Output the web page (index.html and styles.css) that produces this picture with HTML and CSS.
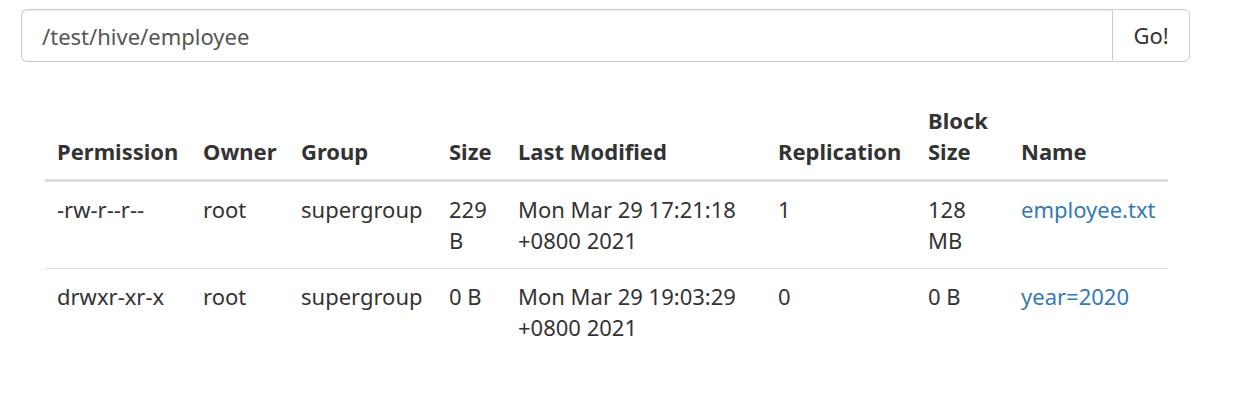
FILE: index.html
```html
<!DOCTYPE html>
<html>
<head>
<meta charset="utf-8">
<link rel="stylesheet" href="styles.css">
</head>
<body>
<div class="page">
  <form class="search">
    <input class="path" type="text" value="/test/hive/employee">
    <button class="go" type="button">Go!</button>
  </form>
  <table class="listing">
    <colgroup>
      <col class="c-perm"><col class="c-owner"><col class="c-group"><col class="c-size"><col class="c-mod"><col class="c-rep"><col class="c-block"><col class="c-name">
    </colgroup>
    <thead>
      <tr>
        <th>Permission</th><th>Owner</th><th>Group</th><th>Size</th><th>Last Modified</th><th>Replication</th><th>Block Size</th><th>Name</th>
      </tr>
    </thead>
    <tbody>
      <tr>
        <td>-rw-r--r--</td><td>root</td><td>supergroup</td><td>229 B</td><td>Mon Mar 29 17:21:18 +0800 2021</td><td>1</td><td>128 MB</td><td><a href="#">employee.txt</a></td>
      </tr>
      <tr>
        <td>drwxr-xr-x</td><td>root</td><td>supergroup</td><td>0 B</td><td>Mon Mar 29 19:03:29 +0800 2021</td><td>0</td><td>0 B</td><td><a href="#">year=2020</a></td>
      </tr>
    </tbody>
  </table>
</div>
</body>
</html>
```

FILE: styles.css
```css
html, body {
  margin: 0;
  padding: 0;
  background: #fff;
}
body {
  font-family: "Noto Sans", "Open Sans", sans-serif;
  font-size: 22px;
  line-height: 31px;
  color: #333;
}
.page {
  padding: 9px 0 0 21px;
}
.search {
  display: flex;
  width: 1169px;
  height: 53px;
  margin: 0;
}
.path {
  flex: 1;
  box-sizing: border-box;
  height: 53px;
  margin: 0;
  padding: 0 20px;
  border: 1px solid #ccc;
  border-right: none;
  border-radius: 6px 0 0 6px;
  font: inherit;
  font-size: 22px;
  color: #555;
  box-shadow: inset 0 1px 1px rgba(0,0,0,0.075);
  outline: none;
}
.go {
  box-sizing: border-box;
  width: 78px;
  height: 53px;
  margin: 0;
  padding: 0;
  border: 1px solid #ccc;
  border-radius: 0 6px 6px 0;
  background: #fff;
  font: inherit;
  font-size: 22px;
  color: #333;
}
.listing {
  margin: 31px 0 0 24px;
  width: 1123px;
  table-layout: fixed;
  border-collapse: collapse;
  border-spacing: 0;
}
.c-perm { width: 146px; }
.c-owner { width: 98px; }
.c-group { width: 148px; }
.c-size { width: 69px; }
.c-mod { width: 260px; }
.c-rep { width: 150px; }
.c-block { width: 93px; }
.c-name { width: 159px; }
.listing th,
.listing td {
  padding: 12px;
  text-align: left;
  vertical-align: top;
}
.listing th {
  vertical-align: bottom;
  font-weight: bold;
  border-bottom: 3px solid #ddd;
}
.listing tbody tr + tr td {
  border-top: 1px solid #ddd;
}
.listing a {
  color: #337ab7;
  text-decoration: none;
}
```
